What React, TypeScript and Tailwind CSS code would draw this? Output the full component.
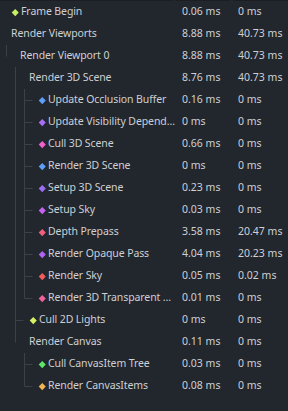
import React from 'react';

type Row = { name: string; level: number; color?: string; time: string; self: string; parent: number };

const rows: Row[] = [
  { name: 'Frame Begin', level: 0, color: '#c6ef63', time: '0.06 ms', self: '0 ms', parent: -1 },
  { name: 'Render Viewports', level: 0, time: '8.88 ms', self: '40.73 ms', parent: -1 },
  { name: 'Render Viewport 0', level: 1, time: '8.88 ms', self: '40.73 ms', parent: 1 },
  { name: 'Render 3D Scene', level: 2, time: '8.76 ms', self: '40.73 ms', parent: 2 },
  { name: 'Update Occlusion Buffer', level: 3, color: '#5e9ef5', time: '0.16 ms', self: '0 ms', parent: 3 },
  { name: 'Update Visibility Depend…', level: 3, color: '#a86ef5', time: '0 ms', self: '0 ms', parent: 3 },
  { name: 'Cull 3D Scene', level: 3, color: '#f060d2', time: '0.66 ms', self: '0 ms', parent: 3 },
  { name: 'Render 3D Scene', level: 3, color: '#5e9ef5', time: '0 ms', self: '0 ms', parent: 3 },
  { name: 'Setup 3D Scene', level: 3, color: '#9d6ef5', time: '0.23 ms', self: '0 ms', parent: 3 },
  { name: 'Setup Sky', level: 3, color: '#c463f0', time: '0.03 ms', self: '0 ms', parent: 3 },
  { name: 'Depth Prepass', level: 3, color: '#f0607e', time: '3.58 ms', self: '20.47 ms', parent: 3 },
  { name: 'Render Opaque Pass', level: 3, color: '#b063f2', time: '4.04 ms', self: '20.23 ms', parent: 3 },
  { name: 'Render Sky', level: 3, color: '#f05c5c', time: '0.05 ms', self: '0.02 ms', parent: 3 },
  { name: 'Render 3D Transparent …', level: 3, color: '#f0609a', time: '0.01 ms', self: '0 ms', parent: 3 },
  { name: 'Cull 2D Lights', level: 2, color: '#d4f063', time: '0 ms', self: '0 ms', parent: 2 },
  { name: 'Render Canvas', level: 2, time: '0.11 ms', self: '0 ms', parent: 2 },
  { name: 'Cull CanvasItem Tree', level: 3, color: '#5ee66a', time: '0.03 ms', self: '0 ms', parent: 15 },
  { name: 'Render CanvasItems', level: 3, color: '#f2b451', time: '0.08 ms', self: '0 ms', parent: 15 },
];

const ROW = 22;
const TOP = 1;

// relationship lines between parents and children
function TreeLines() {
  const segs: React.ReactNode[] = [];
  rows.forEach((r, i) => {
    const kids = rows.map((c, j) => (c.parent === i ? j : -1)).filter((j) => j >= 0);
    if (!kids.length) return;
    const x = 6.5 + 9 * r.level;
    const last = kids[kids.length - 1];
    const y1 = TOP + ROW * (i + 1);
    const y2 = TOP + ROW * last + 11.5;
    segs.push(<line key={'v' + i} x1={x} y1={y1} x2={x} y2={y2} />);
    kids.forEach((k) => {
      if (!rows[k].color) return;
      const cy = TOP + ROW * k + 11.5;
      segs.push(<line key={'h' + k} x1={x} y1={cy} x2={x + 8} y2={cy} />);
    });
  });
  return (
    <svg className="absolute left-0 top-0 pointer-events-none" width="172" height="411" stroke="#3b4049" strokeWidth="1">
      {segs}
    </svg>
  );
}

export default function App() {
  return (
    <div
      className="relative w-[288px] h-[411px] overflow-hidden bg-[#22262d] text-[#cdd0d4] text-[10.5px]"
      style={{ fontFamily: '"Noto Sans", "Open Sans", sans-serif' }}
    >
      <div className="flex h-px">
        <div className="w-[173px] bg-[#1b1e23]" />
        <div className="w-[3px]" />
        <div className="w-[54px] bg-[#1b1e23]" />
        <div className="w-[3px]" />
        <div className="flex-1 bg-[#1b1e23]" />
      </div>
      <TreeLines />
      {rows.map((r, i) => (
        <div key={i} className="flex items-center h-[22px]">
          <div
            className="w-[172px] shrink-0 flex items-center"
            style={{ paddingLeft: r.color ? 9 + 9 * r.level : 11 + 9 * r.level }}
          >
            {r.color && (
              <span className="w-[12px] shrink-0 flex justify-center">
                <span className="w-[4.5px] h-[4.5px] rotate-45" style={{ backgroundColor: r.color }} />
              </span>
            )}
            <span className="whitespace-nowrap tracking-[-0.1px]">{r.name}</span>
          </div>
          <div className="w-[60px] pl-[10px] whitespace-nowrap">{r.time}</div>
          <div className="flex-1 pl-[6px] whitespace-nowrap">{r.self}</div>
        </div>
      ))}
    </div>
  );
}
